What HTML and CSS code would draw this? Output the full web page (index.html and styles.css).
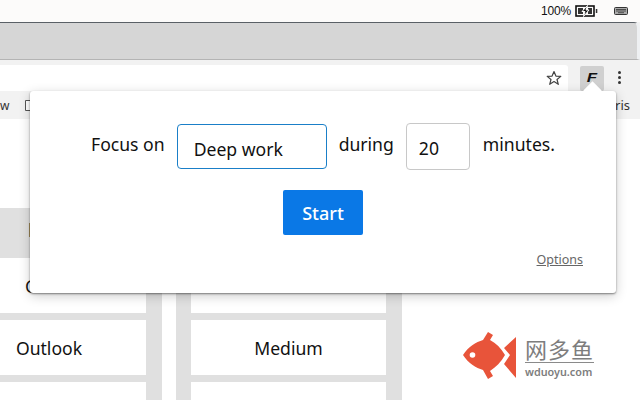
FILE: index.html
```html
<!DOCTYPE html>
<html lang="en">
<head>
    <meta charset="UTF-8">
    <title>Focus</title>
    <link rel="stylesheet" href="styles.css">
</head>
<body>
    <div class="menubar">
        <span class="battery-text">100%</span>
        <svg class="battery-icon" width="23" height="12" viewBox="0 0 23 12">
            <rect x="1" y="1" width="18" height="10" fill="none" stroke="#111" stroke-width="1.600"/>
            <path d="M3 3h5v6H3zM13 3h4v6h-4z" fill="#333"/>
            <path d="M12.500 0.500 7 6.500h3l-1.500 5 5.500-6.500h-3z" fill="#111" stroke="#fcfbfa" stroke-width="1"/>
            <rect x="20.800" y="4" width="1.500" height="4" fill="#333"/>
        </svg>
        <svg class="keyboard-icon" width="14" height="8" viewBox="0 0 14 8">
            <rect x="0.500" y="0.500" width="13" height="7" rx="1" fill="#aaa" stroke="#333"/>
            <path d="M2 2.500h10M2 4h10M4 5.700h6" stroke="#333" stroke-width="0.800"/>
        </svg>
    </div>

    <div class="browser">
        <div class="tabstrip"></div>
        <div class="toolbar">
            <div class="omnibox">
                <svg width="16" height="16" viewBox="0 0 16 16">
                    <path d="M8 1.500 9.900 6.100 14.800 6.400 11 9.500 12.300 14.300 8 11.600 3.700 14.300 5 9.500 1.200 6.400 6.100 6.100z" fill="none" stroke="#444" stroke-width="1.200" stroke-linejoin="round"/>
                </svg>
            </div>
            <div class="ext-btn"><span class="ext-letter">F</span></div>
            <div class="menu-dots"><i></i><i></i><i></i></div>
        </div>
        <div class="bookmarks">
            <span>w</span>
            <svg class="bookmark-page" width="8" height="11" viewBox="0 0 8 11">
                <path d="M0.500 0.500h7v10h-7z" fill="#fff" stroke="#555"/>
            </svg>
            <span class="bookmark-right">Paris</span>
        </div>
    </div>

    <div class="content">
        <div class="col col-one">
            <div class="cell cell-head"><span class="head-icon"></span></div>
            <div class="cell">Gmail</div>
            <div class="cell">Outlook</div>
            <div class="cell"></div>
        </div>
        <div class="col col-narrow"></div>
        <div class="col col-two">
            <div class="cell cell-head"></div>
            <div class="cell"></div>
            <div class="cell">Medium</div>
            <div class="cell"></div>
        </div>
        <div class="watermark">
            <svg width="54" height="47" viewBox="0 0 54 47">
                <path d="M0 23C5 15 13 10 20 8L25 0 30 3 27 8C33 11 38 16 42 23 38 30 33 35 27 39L30 44 25 47 20 38C13 36 5 31 0 23z" fill="#e8543a"/>
                <path d="M53 5V46L41 32 47 23 41 16z" fill="#e8543a"/>
                <circle cx="9.500" cy="23" r="2.800" fill="#fff"/>
            </svg>
            <div class="watermark-text">
                <span class="watermark-cn">网多鱼</span>
                <span class="watermark-url">wduoyu.com</span>
            </div>
        </div>
    </div>

    <div class="popup">
        <div class="popup-arrow"></div>
        <form class="focus-row">
            <label for="task">Focus on</label>
            <input class="task-input" id="task" type="text" value="Deep work">
            <label for="mins">during</label>
            <input class="mins-input" id="mins" type="text" value="20">
            <span class="minutes-label">minutes.</span>
        </form>
        <button class="start-btn" type="button">Start</button>
        <a class="options-link" href="#">Options</a>
    </div>
</body>
</html>
```

FILE: styles.css
```css
* {
    box-sizing: border-box;
}

body {
    margin: 0;
    width: 640px;
    height: 400px;
    overflow: hidden;
    background-color: white;
    font-family: "Noto Sans", sans-serif;
    color: #111;
}

.menubar {
    height: 22px;
    background-color: #fcfbfa;
    display: flex;
    justify-content: flex-end;
    align-items: center;
    padding-right: 12px;
    font-family: "Liberation Sans", sans-serif;
    font-size: 12px;
    letter-spacing: -0.2px;
}

.battery-icon {
    margin-left: 4px;
}

.keyboard-icon {
    margin-left: 16px;
}

.browser {
    background-color: #f2f2f2;
}

.tabstrip {
    height: 38px;
    background-color: #d6d6d6;
    border-top: 1px solid #5a6066;
    border-bottom: 1px solid #b4b4b4;
    border-right: 3px solid #eef0f2;
    border-top-right-radius: 6px;
}

.toolbar {
    height: 31px;
    display: flex;
    align-items: flex-end;
}

.omnibox {
    width: 568px;
    height: 26px;
    background-color: white;
    border-radius: 0 3px 0 0;
    display: flex;
    justify-content: flex-end;
    align-items: center;
    padding-right: 6px;
}

.ext-btn {
    width: 24px;
    height: 25px;
    margin-left: 12px;
    background-color: #d0d0d0;
    border-radius: 2px;
    display: flex;
    justify-content: center;
    align-items: center;
}

.ext-letter {
    font-family: "Liberation Sans", sans-serif;
    font-size: 13px;
    font-weight: 700;
    font-style: italic;
    margin-bottom: 3px;
    transform: scaleX(1.3);
}

.menu-dots {
    display: flex;
    flex-direction: column;
    gap: 2px;
    margin-left: 14px;
    margin-bottom: 7px;
}

.menu-dots i {
    display: block;
    width: 3px;
    height: 3px;
    border-radius: 50%;
    background-color: #333;
}

.bookmarks {
    height: 28px;
    display: flex;
    align-items: center;
    font-size: 12px;
    color: #333;
}

.bookmark-page {
    margin-left: 16px;
}

.bookmark-right {
    margin-left: auto;
    padding-right: 10px;
    font-size: 13px;
}

.content {
    display: flex;
    height: 281px;
    padding-top: 89px;
    overflow: hidden;
}

.col {
    display: flex;
    flex-direction: column;
    flex-shrink: 0;
    gap: 7px;
    background-color: #e0e0e0;
}

.col-one {
    width: 210px;
    margin-left: -48px;
    padding-right: 16px;
}

.col-narrow {
    width: 14px;
    background-color: white;
}

.col-two {
    width: 226px;
    padding: 0 16px 0 15px;
}

.cell {
    height: 55px;
    flex-shrink: 0;
    background-color: white;
    display: flex;
    justify-content: center;
    align-items: center;
    font-size: 17.600px;
}

.cell-head {
    height: 43px;
    background-color: #e0e0e0;
}

.head-icon {
    width: 40px;
    height: 14px;
    background-color: #a08a5a;
}

.watermark {
    display: flex;
    flex-shrink: 0;
    align-items: flex-start;
    gap: 8px;
    margin: 124px 0 0 61px;
    height: 47px;
}

.watermark-text {
    display: flex;
    flex-direction: column;
    color: #7d7d7d;
    margin-top: 2px;
}

.watermark-cn {
    font-family: "Noto Sans CJK SC", sans-serif;
    font-weight: 400;
    font-size: 22px;
    line-height: 28px;
    letter-spacing: 1px;
    border-bottom: 1px solid #8a8a8a;
}

.watermark-url {
    font-size: 10.800px;
    font-weight: 600;
    line-height: 14px;
    margin-top: 2px;
}

.popup {
    position: absolute;
    left: 30px;
    top: 91px;
    width: 586px;
    height: 202px;
    background-color: white;
    border-radius: 3px;
    box-shadow: 0 1px 2px rgba(0, 0, 0, 0.45), 0 3px 12px rgba(0, 0, 0, 0.2);
    display: flex;
    flex-direction: column;
    align-items: center;
    font-size: 17.600px;
}

.popup-arrow {
    position: absolute;
    top: -7px;
    left: 556px;
    width: 13px;
    height: 13px;
    background-color: white;
    transform: rotate(45deg);
}

.focus-row {
    display: flex;
    align-items: flex-start;
    gap: 12px;
    margin-top: 32px;
    line-height: 42px;
}

.focus-row input {
    font-family: inherit;
    font-size: 17.600px;
    color: #111;
    background-color: white;
    outline: none;
}

.task-input {
    width: 150px;
    height: 45px;
    margin-top: 1px;
    padding: 4px 16px 0;
    border: 1px solid #1a7fc8;
    border-radius: 4px;
}

.mins-input {
    width: 64px;
    height: 47px;
    padding: 2px 12px 0;
    border: 1px solid #c8c8c8;
    border-radius: 4px;
}

.minutes-label {
    margin-left: 1px;
}

.start-btn {
    width: 80px;
    height: 45px;
    margin-top: 20px;
    background-color: #0a78e6;
    color: white;
    border: none;
    border-radius: 2px;
    font-family: inherit;
    font-size: 18px;
    font-weight: 500;
}

.options-link {
    align-self: flex-end;
    margin: 16px 33px 0 0;
    color: #666;
    font-size: 12.500px;
}
```
